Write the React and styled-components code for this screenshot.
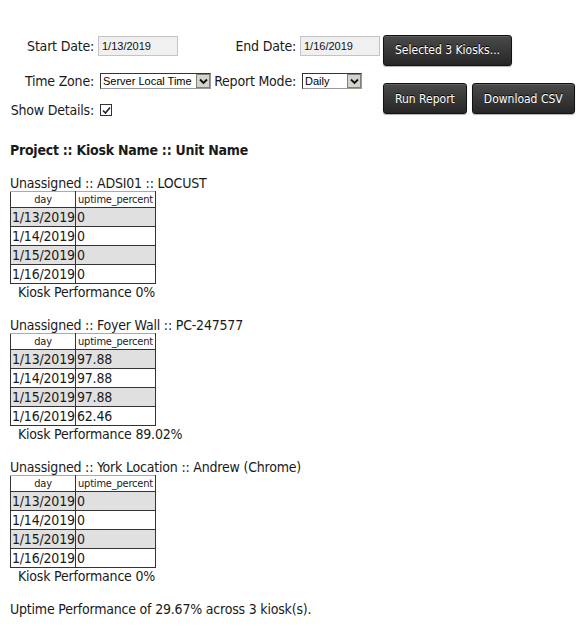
import React from "react";
import styled, { createGlobalStyle } from "styled-components";

const GlobalStyle = createGlobalStyle`
  body {
    margin: 0;
    background: #fff;
    color: #1a1a1a;
    font-family: "DejaVu Sans Condensed", "DejaVu Sans", sans-serif;
    letter-spacing: -0.2px;
  }
`;

const kiosks = [
  {
    title: "Unassigned :: ADSI01 :: LOCUST",
    rows: [
      ["1/13/2019", "0"],
      ["1/14/2019", "0"],
      ["1/15/2019", "0"],
      ["1/16/2019", "0"],
    ],
    perf: "0%",
  },
  {
    title: "Unassigned :: Foyer Wall :: PC-247577",
    rows: [
      ["1/13/2019", "97.88"],
      ["1/14/2019", "97.88"],
      ["1/15/2019", "97.88"],
      ["1/16/2019", "62.46"],
    ],
    perf: "89.02%",
  },
  {
    title: "Unassigned :: York Location :: Andrew (Chrome)",
    rows: [
      ["1/13/2019", "0"],
      ["1/14/2019", "0"],
      ["1/15/2019", "0"],
      ["1/16/2019", "0"],
    ],
    perf: "0%",
  },
];

const ChevronBox = () => (
  <ArrowBox>
    <svg width="9" height="7" viewBox="0 0 9 7">
      <path d="M1 1.5 L4.5 5 L8 1.5" fill="none" stroke="#111" strokeWidth="1.8" />
    </svg>
  </ArrowBox>
);

const Select = ({ value, width }) => (
  <SelectWrap $width={width}>
    <SelectText>{value}</SelectText>
    <ChevronBox />
  </SelectWrap>
);

const App = () => {
  return (
    <>
      <GlobalStyle />
      <Page>
        <Form>
          <Label $top>Start Date:</Label>
          <Field $top>
            <DateInput defaultValue="1/13/2019" />
          </Field>
          <Label $top>End Date:</Label>
          <Field $top>
            <DateInput defaultValue="1/16/2019" />
          </Field>
          <Field>
            <Button>Selected 3 Kiosks...</Button>
          </Field>

          <Label>Time Zone:</Label>
          <Field>
            <Select value="Server Local Time" width={111} />
          </Field>
          <Label>Report Mode:</Label>
          <Field>
            <Select value="Daily" width={60} />
          </Field>
          <ButtonGroup>
            <Button>Run Report</Button>
            <Button>Download CSV</Button>
          </ButtonGroup>

          <Label>Show Details:</Label>
          <Field>
            <CheckBox>
              <svg width="9" height="9" viewBox="0 0 9 9">
                <path d="M1 4.5 L3.5 7 L8 1.5" fill="none" stroke="#1c2440" strokeWidth="1.6" />
              </svg>
            </CheckBox>
          </Field>
        </Form>

        <Heading>Project :: Kiosk Name :: Unit Name</Heading>

        {kiosks.map((k) => (
          <Section key={k.title}>
            <KioskTitle>{k.title}</KioskTitle>
            <Table>
              <thead>
                <tr>
                  <Th $w={64}>day</Th>
                  <Th>uptime_percent</Th>
                </tr>
              </thead>
              <tbody>
                {k.rows.map((r, i) => (
                  <Tr key={r[0]} $odd={i % 2 === 0}>
                    <Td>{r[0]}</Td>
                    <Td>{r[1]}</Td>
                  </Tr>
                ))}
              </tbody>
            </Table>
            <Perf>Kiosk Performance {k.perf}</Perf>
          </Section>
        ))}

        <Summary>Uptime Performance of 29.67% across 3 kiosk(s).</Summary>
      </Page>
    </>
  );
};

const Page = styled.div`
  padding: 34px 10px 20px 10px;
  font-size: 14px;
`;

const Form = styled.div`
  display: grid;
  grid-template-columns: 88px 114px 88px 83px auto;
  grid-template-rows: 32px 30px 28px;
  align-items: center;
`;

const Label = styled.div`
  align-self: ${(p) => (p.$top ? "start" : "center")};
  margin-top: ${(p) => (p.$top ? "2px" : "0")};
  text-align: right;
  padding-right: 4px;
  white-space: nowrap;
  font-size: 14px;
  line-height: 20px;
`;

const Field = styled.div`
  align-self: ${(p) => (p.$top ? "start" : "center")};
  margin-top: ${(p) => (p.$top ? "2px" : "0")};
  display: flex;
  align-items: center;
`;

const DateInput = styled.input`
  box-sizing: border-box;
  width: 80px;
  height: 20px;
  margin: 0;
  padding: 1px 3px;
  border: 1px solid #c4c4c4;
  background: #f0f0f0;
  font-family: "Liberation Sans", Arial, sans-serif;
  font-size: 11px;
  letter-spacing: 0;
  color: #111;
  outline: none;
`;

const SelectWrap = styled.div`
  box-sizing: border-box;
  display: flex;
  align-items: stretch;
  width: ${(p) => p.$width}px;
  height: 16px;
  margin-left: 2px;
  border: 1px solid #333;
  border-right-color: #999;
  border-bottom-color: #999;
  background: #fff;
`;

const SelectText = styled.div`
  flex: 1;
  padding: 0 2px;
  font-family: "Liberation Sans", Arial, sans-serif;
  font-size: 11px;
  letter-spacing: 0;
  line-height: 14px;
  color: #000;
  white-space: nowrap;
  overflow: hidden;
`;

const ArrowBox = styled.div`
  width: 14px;
  display: flex;
  align-items: center;
  justify-content: center;
  background: #d6d3cc;
  border: 1px solid #808080;
  box-sizing: border-box;
`;

const ButtonGroup = styled.div`
  grid-row: 2 / span 2;
  grid-column: 5;
  align-self: start;
  margin-top: 17px;
  display: flex;
  gap: 5px;
`;

const Button = styled.button`
  height: 31px;
  padding: 0 11px;
  border: 1px solid #111;
  border-radius: 3px;
  background: linear-gradient(#4a4a4a, #262626);
  box-shadow: inset 0 1px 0 rgba(255, 255, 255, 0.12), 0 1px 1px rgba(0, 0, 0, 0.3);
  color: #fff;
  font-family: "DejaVu Sans Condensed", "DejaVu Sans", sans-serif;
  font-size: 12px;
  letter-spacing: 0;
  text-shadow: 0 -1px 0 #000;
  cursor: pointer;
  white-space: nowrap;
`;

const CheckBox = styled.span`
  box-sizing: border-box;
  width: 12px;
  height: 12px;
  margin-left: 2px;
  border: 1px solid #333;
  background: #fff;
  display: flex;
  align-items: center;
  justify-content: center;
`;

const Heading = styled.h3`
  margin: 17px 0 16px 0;
  font-size: 14px;
  line-height: 18px;
  letter-spacing: -0.25px;
  font-weight: bold;
`;

const Section = styled.div`
  margin-bottom: 16px;
`;

const KioskTitle = styled.div`
  line-height: 16px;
`;

const Table = styled.table`
  border-collapse: collapse;
  width: 146px;
  border: 1px solid #aaa;
  border-right-color: #777;
  border-bottom-color: #555;
`;

const Th = styled.th`
  width: ${(p) => (p.$w ? `${p.$w}px` : "auto")};
  padding: 0;
  height: 15px;
  font-size: 11px;
  font-weight: normal;
  line-height: 13px;
  border: 1px solid #333;
  border-top-color: #aaa;
`;

const Tr = styled.tr`
  background: ${(p) => (p.$odd ? "#e0e0e0" : "#fff")};
`;

const Td = styled.td`
  padding: 0 0 0 1px;
  height: 18px;
  line-height: 17px;
  font-size: 14px;
  border: 1px solid #333;
  white-space: nowrap;
`;

const Perf = styled.div`
  padding-left: 8px;
  line-height: 17px;
`;

const Summary = styled.div`
  line-height: 17px;
`;

export default App;
